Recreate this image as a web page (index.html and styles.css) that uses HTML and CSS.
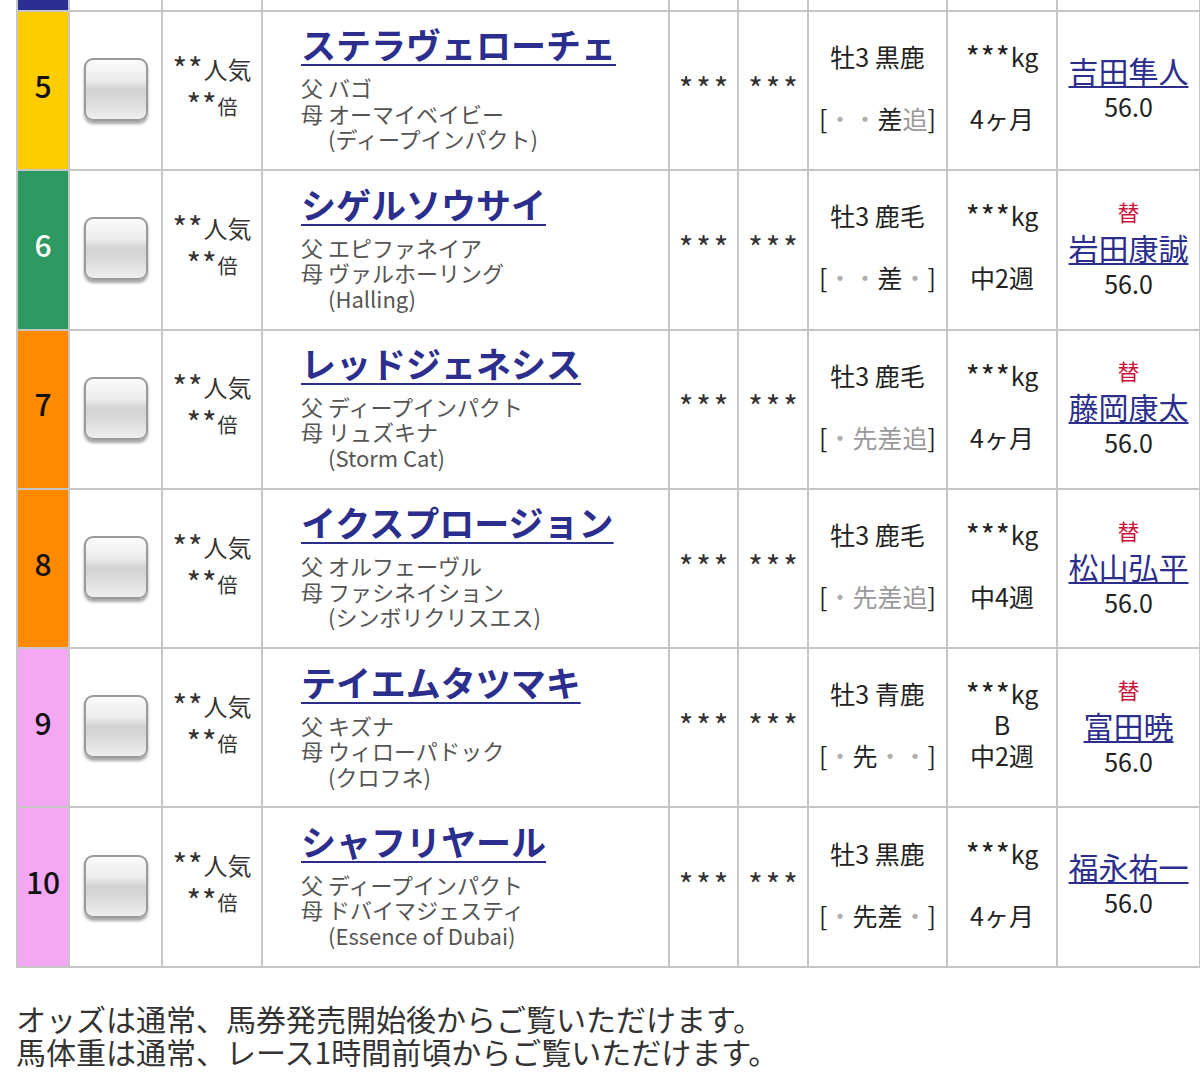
FILE: index.html
```html
<!DOCTYPE html>
<html lang="ja">
<head>
<meta charset="utf-8">
<title>出馬表</title>
<link rel="stylesheet" href="styles.css">
</head>
<body>
<div class="page">
  <table class="entries">
    <colgroup>
      <col class="c-waku"><col class="c-chk"><col class="c-pop"><col class="c-name"><col class="c-odds"><col class="c-odds2"><col class="c-sex"><col class="c-wt"><col class="c-jk">
    </colgroup>
    <tr class="partial">
      <td class="waku w4"></td><td></td><td></td><td></td><td></td><td></td><td></td><td></td><td></td>
    </tr>
    <tr class="horse">
      <td class="waku w5">5</td>
      <td><div class="chk"></div></td>
      <td class="pop"><div><span class="ast">**</span>人気</div><div><span class="ast">**</span><span class="bai">倍</span></div></td>
      <td class="namecell">
        <a class="hname" href="#">ステラヴェローチェ</a>
        <div class="sire">父 バゴ</div>
        <div class="sire">母 オーマイベイビー</div>
        <div class="sire bms">(ディープインパクト)</div>
      </td>
      <td class="odds"><span class="ast">***</span></td>
      <td class="odds"><span class="ast">***</span></td>
      <td class="sex"><div>牡3 黒鹿</div><div>&nbsp;</div><div class="st">[<span class="d">・</span><span class="d">・</span>差<span class="w">追</span>]</div></td>
      <td class="wt"><div><span class="ast">***</span>kg</div><div>&nbsp;</div><div>4ヶ月</div></td>
      <td class="jk"><a class="jname" href="#">吉田隼人</a><div class="kin">56.0</div></td>
    </tr>
    <tr class="horse">
      <td class="waku w6">6</td>
      <td><div class="chk"></div></td>
      <td class="pop"><div><span class="ast">**</span>人気</div><div><span class="ast">**</span><span class="bai">倍</span></div></td>
      <td class="namecell">
        <a class="hname" href="#">シゲルソウサイ</a>
        <div class="sire">父 エピファネイア</div>
        <div class="sire">母 ヴァルホーリング</div>
        <div class="sire bms">(Halling)</div>
      </td>
      <td class="odds"><span class="ast">***</span></td>
      <td class="odds"><span class="ast">***</span></td>
      <td class="sex"><div>牡3 鹿毛</div><div>&nbsp;</div><div class="st">[<span class="d">・</span><span class="d">・</span>差<span class="d">・</span>]</div></td>
      <td class="wt"><div><span class="ast">***</span>kg</div><div>&nbsp;</div><div>中2週</div></td>
      <td class="jk"><div class="kae">替</div><a class="jname" href="#">岩田康誠</a><div class="kin">56.0</div></td>
    </tr>
    <tr class="horse">
      <td class="waku w7">7</td>
      <td><div class="chk"></div></td>
      <td class="pop"><div><span class="ast">**</span>人気</div><div><span class="ast">**</span><span class="bai">倍</span></div></td>
      <td class="namecell">
        <a class="hname" href="#">レッドジェネシス</a>
        <div class="sire">父 ディープインパクト</div>
        <div class="sire">母 リュズキナ</div>
        <div class="sire bms">(Storm Cat)</div>
      </td>
      <td class="odds"><span class="ast">***</span></td>
      <td class="odds"><span class="ast">***</span></td>
      <td class="sex"><div>牡3 鹿毛</div><div>&nbsp;</div><div class="st">[<span class="d">・</span><span class="w">先</span><span class="w">差</span><span class="w">追</span>]</div></td>
      <td class="wt"><div><span class="ast">***</span>kg</div><div>&nbsp;</div><div>4ヶ月</div></td>
      <td class="jk"><div class="kae">替</div><a class="jname" href="#">藤岡康太</a><div class="kin">56.0</div></td>
    </tr>
    <tr class="horse">
      <td class="waku w8">8</td>
      <td><div class="chk"></div></td>
      <td class="pop"><div><span class="ast">**</span>人気</div><div><span class="ast">**</span><span class="bai">倍</span></div></td>
      <td class="namecell">
        <a class="hname" href="#">イクスプロージョン</a>
        <div class="sire">父 オルフェーヴル</div>
        <div class="sire">母 ファシネイション</div>
        <div class="sire bms">(シンボリクリスエス)</div>
      </td>
      <td class="odds"><span class="ast">***</span></td>
      <td class="odds"><span class="ast">***</span></td>
      <td class="sex"><div>牡3 鹿毛</div><div>&nbsp;</div><div class="st">[<span class="d">・</span><span class="w">先</span><span class="w">差</span><span class="w">追</span>]</div></td>
      <td class="wt"><div><span class="ast">***</span>kg</div><div>&nbsp;</div><div>中4週</div></td>
      <td class="jk"><div class="kae">替</div><a class="jname" href="#">松山弘平</a><div class="kin">56.0</div></td>
    </tr>
    <tr class="horse">
      <td class="waku w9">9</td>
      <td><div class="chk"></div></td>
      <td class="pop"><div><span class="ast">**</span>人気</div><div><span class="ast">**</span><span class="bai">倍</span></div></td>
      <td class="namecell">
        <a class="hname" href="#">テイエムタツマキ</a>
        <div class="sire">父 キズナ</div>
        <div class="sire">母 ウィローパドック</div>
        <div class="sire bms">(クロフネ)</div>
      </td>
      <td class="odds"><span class="ast">***</span></td>
      <td class="odds"><span class="ast">***</span></td>
      <td class="sex"><div>牡3 青鹿</div><div>&nbsp;</div><div class="st">[<span class="d">・</span>先<span class="d">・</span><span class="d">・</span>]</div></td>
      <td class="wt"><div><span class="ast">***</span>kg</div><div>B</div><div>中2週</div></td>
      <td class="jk"><div class="kae">替</div><a class="jname" href="#">富田暁</a><div class="kin">56.0</div></td>
    </tr>
    <tr class="horse">
      <td class="waku w10">10</td>
      <td><div class="chk"></div></td>
      <td class="pop"><div><span class="ast">**</span>人気</div><div><span class="ast">**</span><span class="bai">倍</span></div></td>
      <td class="namecell">
        <a class="hname" href="#">シャフリヤール</a>
        <div class="sire">父 ディープインパクト</div>
        <div class="sire">母 ドバイマジェスティ</div>
        <div class="sire bms">(Essence of Dubai)</div>
      </td>
      <td class="odds"><span class="ast">***</span></td>
      <td class="odds"><span class="ast">***</span></td>
      <td class="sex"><div>牡3 黒鹿</div><div>&nbsp;</div><div class="st">[<span class="d">・</span>先差<span class="d">・</span>]</div></td>
      <td class="wt"><div><span class="ast">***</span>kg</div><div>&nbsp;</div><div>4ヶ月</div></td>
      <td class="jk"><a class="jname" href="#">福永祐一</a><div class="kin">56.0</div></td>
    </tr>
  </table>
  <div class="note">
    <p>オッズは通常、馬券発売開始後からご覧いただけます。</p>
    <p>馬体重は通常、レース1時間前頃からご覧いただけます。</p>
  </div>
</div>
</body>
</html>
```
FILE: styles.css
```css
html, body {
  margin: 0;
  padding: 0;
  background: #ffffff;
}
body {
  font-family: "Noto Sans CJK JP", "Noto Sans", sans-serif;
  color: #222222;
}
.page {
  padding-left: 16px;
}
.entries {
  border-collapse: collapse;
  table-layout: fixed;
  width: 1183px;
  margin-top: -10px;
}
.c-waku { width: 52px; }
.c-chk { width: 93px; }
.c-pop { width: 100px; }
.c-name { width: 407px; }
.c-odds { width: 69px; }
.c-odds2 { width: 70px; }
.c-sex { width: 139px; }
.c-wt { width: 110px; }
.c-jk { width: 143px; }

.entries td {
  border: 2px solid #c6c6c6;
  padding: 0;
  text-align: center;
  vertical-align: middle;
}
.partial td {
  height: 18px;
}
.horse td {
  height: 151.3px;
  padding-bottom: 6px;
}
.waku {
  font-size: 30px;
  font-weight: 500;
  color: #111111;
}
.horse .waku {
  padding-bottom: 12px;
  height: 145.3px;
}
.w4 { background: #2a2f91; }
.w5 { background: #ffcc00; }
.entries .w6 { background: #2e9a62; color: #ffffff; }
.w7, .w8 { background: #ff8a00; }
.w9, .w10 { background: #f4a8f4; }

.chk {
  box-sizing: border-box;
  width: 64px;
  height: 63px;
  margin: 4px auto 0;
  border: 2px solid #9a9a9a;
  border-radius: 9px;
  background: linear-gradient(#fbfbfb 0%, #ebebeb 35%, #d2d2d2 50%, #dedede 75%, #efefef 100%);
  box-shadow: 0 3px 3px rgba(0, 0, 0, 0.35);
}

.ast {
  font-size: 1.3em;
  letter-spacing: 1px;
  line-height: 0;
  vertical-align: -0.08em;
}

.pop {
  font-size: 24px;
  line-height: 36px;
  color: #333333;
}
.pop .bai {
  font-size: 20px;
}

.namecell {
  text-align: left !important;
  padding-left: 38px !important;
}
.hname {
  display: inline-block;
  font-size: 35px;
  font-weight: bold;
  line-height: 42px;
  color: #2b2e8c;
  text-decoration: underline;
  text-decoration-thickness: 2px;
  text-underline-offset: 5px;
  margin-bottom: 10px;
}
.sire {
  font-size: 22px;
  line-height: 25.5px;
  color: #555555;
}
.bms {
  padding-left: 27px;
}

.odds {
  font-size: 24px;
  color: #333333;
}
.odds .ast {
  letter-spacing: 3px;
  padding-left: 3px;
}

.sex, .wt {
  font-size: 25px;
  line-height: 31px;
  color: #222222;
}
.wt .ast {
  font-size: 1.2em;
  letter-spacing: 1px;
}
.st .d {
  color: #b0b0b0;
}
.st .w {
  color: #999999;
}

.jk {
  line-height: 36px;
}
.kae {
  font-size: 22px;
  color: #c8143c;
}
.jname {
  display: block;
  font-size: 30px;
  color: #2b2e8c;
  text-decoration: underline;
  text-decoration-thickness: 2px;
  text-underline-offset: 3px;
}
.kin {
  font-size: 25px;
  color: #222222;
}

.note {
  margin-top: 34px;
  font-size: 30px;
  line-height: 33px;
  color: #333333;
}
.note p {
  margin: 0;
}
```
